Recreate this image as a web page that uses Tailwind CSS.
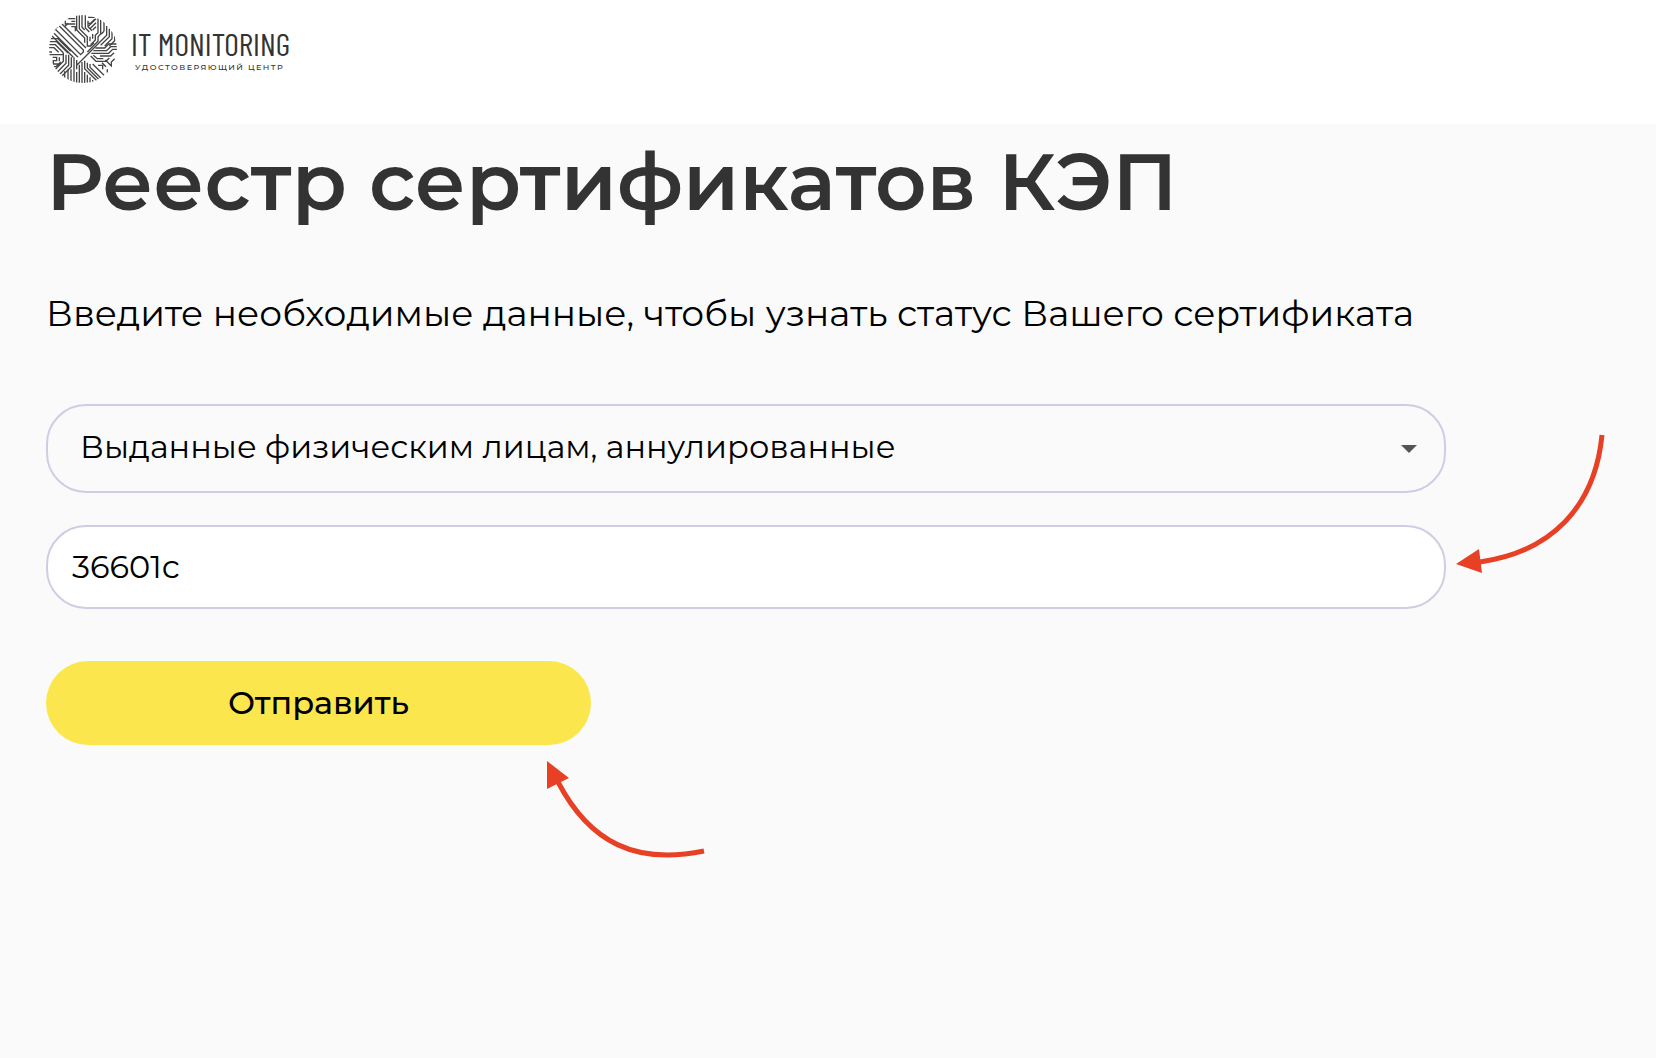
<!DOCTYPE html>
<html lang="ru">

<head>
    <meta charset="UTF-8">
    <meta name="viewport" content="width=device-width, initial-scale=1.0">
    <title>Реестр сертификатов КЭП</title>
    <script src="https://cdn.jsdelivr.net/npm/@tailwindcss/browser@4"></script>
</head>

<body class="flex flex-col min-h-screen bg-[#fafafa] text-black antialiased font-['Montserrat','Inter',sans-serif]">
    <header class="h-[124px] bg-white px-12 pt-[14px]">
        <a href="#" class="inline-flex items-center gap-[13px] text-[#333]">
            <svg class="size-[70px]" viewBox="22 18 210 210" fill="none" stroke="#444" stroke-width="4" aria-hidden="true">
                <defs>
                    <clipPath id="disc"><circle cx="127" cy="123" r="102" /></clipPath>
                </defs>
                <g clip-path="url(#disc)">
                    <!-- top left -->
                    <path d="M82 20V32H104M74 38V48H104M92 40H104M92 56H104V70" />
                    <path d="M56 54L128 126V132L120 140L44 64M50 56L36 70M64 48L136 120M72 56L82 46" />
                    <path d="M40 76L112 148M34 84L98 148M28 92L52 92L90 130M24 101H48L82 135M24 110H44L68 134M24 119H40L54 133" />
                    <!-- top -->
                    <path d="M108 20V66L132 90V104M116 20V62L140 86V98M124 20V58L132 66" />
                    <path d="M134 20V60L146 72M142 38V56L154 68M144 46H150L162 34M144 54L166 32M148 62L166 44M156 66L166 56M142 28H162" />
                    <path d="M172 26V74L164 82V96L150 110M180 34V78L172 86V100L140 132M190 40V70M190 70L182 78" />
                    <path d="M140 98V114H150L160 104M148 86V100M156 78V92" />
                    <!-- right -->
                    <path d="M198 54V82L124 156M206 62V86L180 112M214 70V92L192 114M222 84V98L206 114" />
                    <path d="M230 108H204L192 120H164M230 116H210L198 128H158M230 124H216L204 136H152M220 134L210 144H178" />
                    <path d="M150 144L166 160H196L206 150M158 142L170 152H188M184 164L196 176M172 172H186V184M194 156L212 174V162L222 152M200 184V194" />
                    <!-- left -->
                    <path d="M24 132H34M24 140H70M36 148H48V158H38V168H60M56 148V160M24 176H46L60 162M68 134V160L40 188" />
                    <path d="M76 140V166L48 194M84 140V172L56 200M92 148V176L64 204M72 190V214" />
                    <!-- bottom -->
                    <path d="M100 148V226M108 156V184M82 184V218M91 184V222M108 192V226M124 156L108 172M116 170V226M124 162V226" />
                    <path d="M132 158V182L176 226M132 192V226M140 164V180L180 220M148 168V178L184 214M140 200V224M148 208V224M156 168L190 202M156 216V224" />
                </g>
            </svg>
            <span class="flex flex-col gap-1 pt-1">
                <span class="text-[32px] leading-7 font-['Barlow_Condensed','Roboto',sans-serif]">IT MONITORING</span>
                <span class="ml-1 text-[8px] leading-3 tracking-[0.18em] font-medium uppercase">Удостоверяющий центр</span>
            </span>
        </a>
    </header>

    <main class="flex-1 pl-[46px] pr-[210px] pt-[10px]">
        <h1 class="text-[80px] leading-[96px] font-semibold text-[#333] whitespace-nowrap">Реестр сертификатов КЭП</h1>
        <p class="mt-[61px] text-[36px] leading-[44px] whitespace-nowrap">Введите необходимые данные, чтобы узнать статус Вашего сертификата</p>

        <form class="mt-[69px]" onsubmit="return false">
            <div class="relative">
                <select aria-label="Тип сертификата"
                    class="block w-full h-[89px] pl-8 pr-20 pb-1 rounded-[40px] border-2 border-[#cfcde3] bg-transparent text-[32px] appearance-none focus:outline-none">
                    <option>Выданные физическим лицам, аннулированные</option>
                </select>
                <svg class="absolute right-[29px] top-[41px] w-4 h-2 pointer-events-none" viewBox="0 0 16 8" fill="#555" aria-hidden="true">
                    <path d="M0 0H16L8 8Z" />
                </svg>
            </div>

            <div class="relative mt-8">
                <input type="text" value="36601с" aria-label="Серийный номер"
                    class="block w-full h-[84px] px-6 pb-[2px] rounded-[40px] border-2 border-[#cfcde3] bg-white text-[32px] focus:outline-none">
                <svg class="absolute left-full bottom-8 ml-2 w-[152px] h-[144px]" viewBox="1454 433 152 144" fill="none" aria-hidden="true">
                    <path d="M1602 435C1595 507 1551 552 1480 562" stroke="#e84025" stroke-width="5" />
                    <path d="M1456 564L1479 549L1482 573Z" fill="#e84025" />
                </svg>
            </div>

            <div class="relative mt-[52px] w-[545px]">
                <button type="submit"
                    class="block w-full h-[84px] rounded-[42px] bg-[#fce64d] text-[32px] font-medium hover:cursor-pointer">Отправить</button>
                <svg class="absolute left-[500px] top-full mt-4 w-[160px] h-[98px]" viewBox="546 761 160 98" fill="none" aria-hidden="true">
                    <path d="M558 782C590 843 636 865 704 851" stroke="#e84025" stroke-width="5" />
                    <path d="M547 761L569 778L547 789Z" fill="#e84025" />
                </svg>
            </div>
        </form>
    </main>
</body>

</html>
